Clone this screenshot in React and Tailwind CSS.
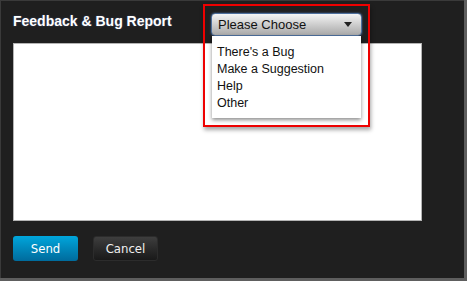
import React from "react";

const options = ["There's a Bug", "Make a Suggestion", "Help", "Other"];

const App = () => {
  return (
    <div className="w-[467px] h-[281px] bg-[#5e5e5e] pr-[3px] pb-[3px] font-['Liberation_Sans',Arial,sans-serif]">
      <div className="relative flex h-full flex-col border-t border-l border-[#3a3a3a] bg-[#1f1f1f] px-[12px]">
        <div className="h-[42px] pt-[12px] text-[14px] font-bold leading-[16px] text-white [text-shadow:0_0_2px_rgba(120,160,255,0.35)]">
          Feedback &amp; Bug Report
        </div>

        <div className="h-[178px] w-[409px] border border-[#b4b4b4] bg-white" />

        <div className="mt-[15px] flex gap-[15px] font-['DejaVu_Sans_Condensed',Roboto,sans-serif] text-[13px]">
          <button className="h-[25px] w-[65px] rounded-[3px] bg-gradient-to-b from-[#00a6dc] to-[#006b9c] text-white">
            Send
          </button>
          <button className="h-[25px] w-[65px] rounded-[3px] border border-[#2c2c2c] bg-gradient-to-b from-[#3e3e3e] to-[#191919] text-[#f0f0f0]">
            Cancel
          </button>
        </div>

        {/* dropdown overlay, highlighted */}
        <div className="absolute left-[202px] top-[3px] h-[123px] w-[167px] border-2 border-[#ee0000] shadow-[1px_3px_4px_rgba(0,0,0,0.35)]">
          <div className="ml-[6px] mt-[7px] w-[151px]">
            <div className="flex h-[23px] items-center justify-between rounded-[4px] border border-[#4d6f9c] bg-gradient-to-b from-[#f4f4f4] to-[#a9a9a9] pl-[6px] pr-[9px] text-[13px] text-[#111] shadow-[0_0_2px_rgba(80,130,200,0.8)]">
              <span>Please Choose</span>
              <svg width="8" height="5" viewBox="0 0 8 5">
                <path d="M0 0h8L4 5z" fill="#222" />
              </svg>
            </div>
            <div className="mx-[1px] h-[82px] bg-white pl-[5px] pt-[8px] text-[12.5px] leading-[17px] text-[#111] shadow-[0_2px_4px_rgba(0,0,0,0.45)]">
              {options.map((o) => (
                <div key={o}>{o}</div>
              ))}
            </div>
          </div>
        </div>
      </div>
    </div>
  );
};

export default App;
